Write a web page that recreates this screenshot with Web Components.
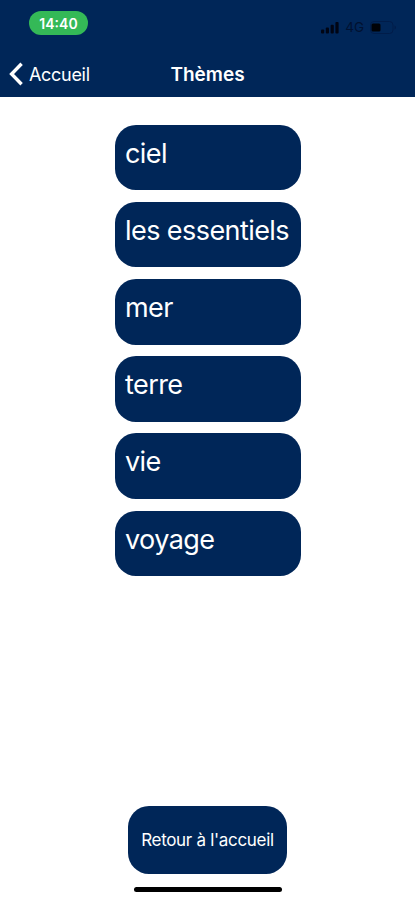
<!DOCTYPE html>
<html lang="fr">
<head>
<meta charset="utf-8">
<meta name="viewport" content="width=device-width, initial-scale=1">
<title>Thèmes</title>
<style>
  body {
    margin: 0;
    background: #fff;
    font-family: Inter, "Liberation Sans", sans-serif;
    --navy: #002658;
  }
</style>
</head>
<body>
<theme-screen>
  <status-bar slot="top" time="14:40" network="4G"></status-bar>
  <nav-bar slot="top" back="Accueil">Thèmes</nav-bar>
  <theme-card>ciel</theme-card>
  <theme-card>les essentiels</theme-card>
  <theme-card>mer</theme-card>
  <theme-card>terre</theme-card>
  <theme-card>vie</theme-card>
  <theme-card>voyage</theme-card>
  <home-button slot="bottom">Retour à l'accueil</home-button>
</theme-screen>

<script>
class ThemeScreen extends HTMLElement {
  constructor() {
    super();
    this.attachShadow({ mode: "open" });
    this.shadowRoot.innerHTML = `
    <style>
      :host {
        display: flex;
        flex-direction: column;
        height: 900px;
        overflow: hidden;
      }
      header {
        height: 97px;
        background: var(--navy);
      }
      main {
        flex: 1;
        display: flex;
        flex-direction: column;
        align-items: center;
        gap: 11.6px;
        padding-top: 27.6px;
      }
      footer {
        display: flex;
        flex-direction: column;
        align-items: center;
        gap: 13px;
        padding-bottom: 8px;
      }
      .indicator {
        width: 148px;
        height: 5.5px;
        border-radius: 3px;
        background: #000;
      }
    </style>
    <header><slot name="top"></slot></header>
    <main><slot></slot></main>
    <footer>
      <slot name="bottom"></slot>
      <div class="indicator"></div>
    </footer>
    `;
  }
}

class StatusBar extends HTMLElement {
  constructor() {
    super();
    this.attachShadow({ mode: "open" });
    this.shadowRoot.innerHTML = `
    <style>
      :host {
        display: flex;
        justify-content: space-between;
        align-items: flex-start;
        box-sizing: border-box;
        height: 52px;
        padding: 11px 18px 0 29px;
      }
      .time {
        width: 59px;
        height: 24px;
        border-radius: 12px;
        background: #34b957;
        color: #fff;
        font-size: 14px;
        font-weight: 600;
        line-height: 25px;
        text-align: center;
      }
      .signals {
        display: flex;
        align-items: center;
        gap: 6px;
        height: 32px;
        color: #001130;
        font-size: 13.5px;
      }
    </style>
    <div class="time"></div>
    <div class="signals">
      <svg width="18" height="13" viewBox="0 0 18 13" fill="#000514">
        <rect x="0" y="8.5" width="3.2" height="4" rx="1"/>
        <rect x="4.8" y="6.5" width="3.2" height="6" rx="1"/>
        <rect x="9.6" y="3.8" width="3.2" height="8.7" rx="1"/>
        <rect x="14.4" y="1" width="3.2" height="11.5" rx="1"/>
      </svg>
      <span></span>
      <svg width="27" height="13" viewBox="0 0 27 13">
        <rect x="0.5" y="0.5" width="22.5" height="12" rx="3.5" fill="none" stroke="#001c49"/>
        <rect x="1.5" y="2.5" width="9" height="8" rx="1.5" fill="#000207"/>
        <path d="M24.5 4.5Q26 5 26 6.5T24.5 8.5Z" fill="#001c49"/>
      </svg>
    </div>
    `;
  }

  connectedCallback() {
    this.shadowRoot.querySelector(".time").textContent = this.getAttribute("time");
    this.shadowRoot.querySelector("span").textContent = this.getAttribute("network");
  }
}

class NavBar extends HTMLElement {
  constructor() {
    super();
    this.attachShadow({ mode: "open" });
    this.shadowRoot.innerHTML = `
    <style>
      :host {
        display: grid;
        grid-template-columns: 1fr auto 1fr;
        align-items: center;
        height: 44px;
        color: #fff;
      }
      .back {
        display: flex;
        align-items: center;
        gap: 6px;
        padding-left: 9px;
        font-size: 18px;
        letter-spacing: -0.3px;
      }
      .title {
        font-size: 19px;
        font-weight: 600;
        letter-spacing: 0;
      }
    </style>
    <div class="back">
      <svg width="14" height="24" viewBox="0 0 14 24" fill="none" stroke="#fff" stroke-width="3.4">
        <path d="M12.6 1.8L2.6 12L12.6 22.2"/>
      </svg>
      <span></span>
    </div>
    <div class="title"><slot></slot></div>
    `;
  }

  connectedCallback() {
    this.shadowRoot.querySelector("span").textContent = this.getAttribute("back");
  }
}

class ThemeCard extends HTMLElement {
  constructor() {
    super();
    this.attachShadow({ mode: "open" });
    this.shadowRoot.innerHTML = `
    <style>
      :host {
        display: block;
        box-sizing: border-box;
        width: 186px;
        height: 65.6px;
        padding: 11px 0 0 10.5px;
        border-radius: 21px;
        background: var(--navy);
        color: #fff;
        font-size: 27px;
        line-height: 36px;
        letter-spacing: -0.57px;
        white-space: nowrap;
      }
    </style>
    <slot></slot>
    `;
  }
}

class HomeButton extends HTMLElement {
  constructor() {
    super();
    this.attachShadow({ mode: "open" });
    this.shadowRoot.innerHTML = `
    <style>
      :host {
        display: flex;
        align-items: center;
        justify-content: center;
        width: 159px;
        height: 67.5px;
        border-radius: 21px;
        background: var(--navy);
        color: #fff;
        font-size: 17px;
        letter-spacing: -0.3px;
        white-space: nowrap;
      }
    </style>
    <slot></slot>
    `;
  }
}

customElements.define("theme-screen", ThemeScreen);
customElements.define("status-bar", StatusBar);
customElements.define("nav-bar", NavBar);
customElements.define("theme-card", ThemeCard);
customElements.define("home-button", HomeButton);
</script>
</body>
</html>
